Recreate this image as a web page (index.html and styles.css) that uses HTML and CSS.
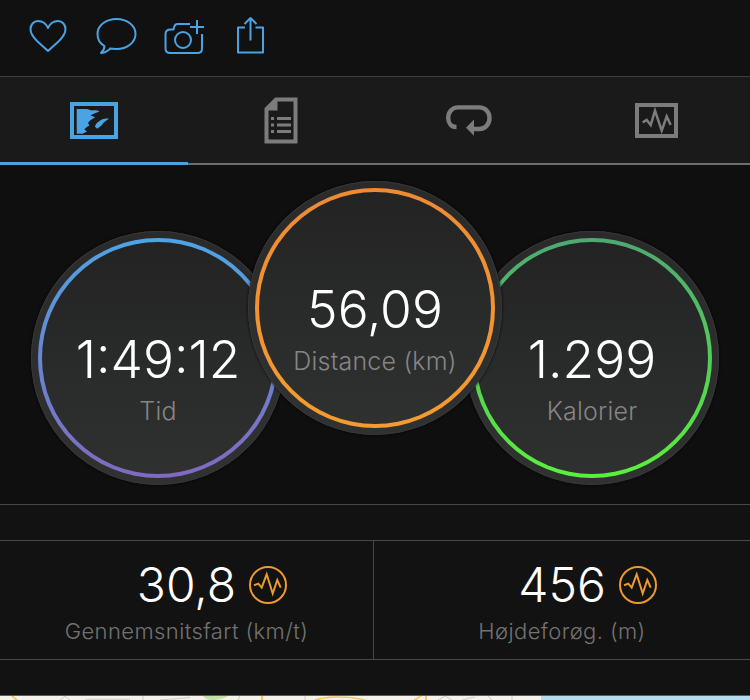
FILE: index.html
```html
<!DOCTYPE html>
<html lang="da">
<head>
<meta charset="utf-8">
<title>Aktivitet</title>
<link rel="stylesheet" href="styles.css">
</head>
<body>
<div class="page">
  <header class="actions">
    <svg class="action-icon" viewBox="0 0 44 44"><path d="M22 12C20 7.500 16 5 12 5 7.500 5 4.500 9 4.500 13 4.500 17 7 21 11 25L22 35 33 25C37 21 39.500 17 39.500 13 39.500 9 36.500 5 32 5 28 5 24 7.500 22 12Z"/></svg>
    <svg class="action-icon" viewBox="0 0 44 44"><path d="M16 33C13 35.500 10 37 7 37 9 35 10.500 32.500 10.500 30 6 27.500 3.500 23 3.500 18 3.500 9.500 12 3 22.500 3 33 3 41.500 9.500 41.500 18 41.500 26.500 33 33 22.500 33 20.500 33 18 33 16 32.600Z"/></svg>
    <svg class="action-icon" viewBox="0 0 44 44"><path d="M28 8H15.500C13.500 8 12.800 9 12.300 10.500L11.500 13.500H8.500C5.500 13.500 3.500 15 3.500 18V32.500C3.500 35.500 5.500 37 8.500 37H35.500C38 37 40 35.500 40 32.500V18"/><circle cx="21" cy="24" r="8"/><path d="M35 4V18M28 11H42"/></svg>
    <svg class="action-icon" viewBox="0 0 44 44"><path d="M15 11.500H8V36.500H33V11.500H25.500M20.500 2V24.500M14.500 8L20.500 2 26.500 8"/></svg>
  </header>

  <nav class="tabs">
    <div class="tab tab-active">
      <svg class="tab-icon" width="48" height="37" viewBox="0 0 48 37"><rect class="tab-frame" x="2" y="2" width="44" height="33"/><path class="tab-fill" d="M6.700 7H17L22 8.500C25 8 28 8.500 29.500 9.500 26 11 22 12 20.500 13.500 22 14 24 14.500 25 15.500 22 17 19 19 18 21L19.500 23.500C17 25 15 26 14.500 27.500L17 29.500C15 30.500 13.500 31 13 31.700H6.700ZM39 16.700C35 16 31.700 17 28 20 25.500 22 25 24.700 25 24.700L27.300 26.700 31.700 23.300C33 20.500 36 18.800 39 16.700Z"/></svg>
    </div>
    <div class="tab">
      <svg class="tab-icon" width="32" height="45" viewBox="0 0 32 45"><path class="tab-frame" d="M11 1.500H30.500V43.500H1.500V11Z"/><path class="tab-fill" d="M12.500 1V12.500H1ZM6 19h3v3H6ZM12 19H26v3H12ZM6 25.500h3v3H6ZM12 25.500H26v3H12ZM6 32h3v3H6ZM12 32H26v3H12Z"/></svg>
    </div>
    <div class="tab">
      <svg class="tab-icon" width="46" height="31" viewBox="0 0 46 31"><path class="tab-frame tab-loop" d="M10.500 22H10C5.500 22 2.200 18.500 2.200 13 2.200 7 6 2.400 12 2.400H33C39.500 2.400 43.500 7 43.500 13 43.500 19 39.500 24 33.500 24H26"/><path class="tab-fill" d="M20 22.700L28 14.500V30.700Z"/></svg>
    </div>
    <div class="tab">
      <svg class="tab-icon" width="43" height="35" viewBox="0 0 43 35"><rect class="tab-frame" x="2" y="2" width="39" height="31"/><path class="tab-wave" d="M7.700 19.400L11.700 17 15.700 22 20 7.700 26.700 27.700 31.700 13.400 35.700 22"/></svg>
    </div>
  </nav>

  <section class="dials">
    <div class="dial dial-side">
      <div class="ring ring-time">
        <div class="dial-face">
          <div class="dial-value">1:49:12</div>
          <div class="dial-label">Tid</div>
        </div>
      </div>
    </div>
    <div class="dial dial-main">
      <div class="ring ring-distance">
        <div class="dial-face">
          <div class="dial-value">56,09</div>
          <div class="dial-label">Distance (km)</div>
        </div>
      </div>
    </div>
    <div class="dial dial-side">
      <div class="ring ring-calories">
        <div class="dial-face">
          <div class="dial-value">1.299</div>
          <div class="dial-label">Kalorier</div>
        </div>
      </div>
    </div>
  </section>

  <div class="spacer"></div>

  <section class="stats">
    <div class="stat">
      <div class="stat-value">30,8
        <svg class="badge" viewBox="0 0 40 40"><circle cx="20" cy="20" r="18"/><path d="M6 20.300L10.300 18.600 13.700 22.600 18.700 9.300 24.700 28.600 29.300 15 32.700 22.600"/></svg>
      </div>
      <div class="stat-label">Gennemsnitsfart (km/t)</div>
    </div>
    <div class="stat">
      <div class="stat-value">456
        <svg class="badge" viewBox="0 0 40 40"><circle cx="20" cy="20" r="18"/><path d="M6 20.300L10.300 18.600 13.700 22.600 18.700 9.300 24.700 28.600 29.300 15 32.700 22.600"/></svg>
      </div>
      <div class="stat-label">Højdeforøg. (m)</div>
    </div>
  </section>

  <div class="spacer"></div>

  <svg class="map" viewBox="0 0 750 5" preserveAspectRatio="none">
    <rect class="map-water" x="541" y="0" width="209" height="5"/>
    <path class="map-green" d="M203 0H228C225 3 218 5 212 5 208 5 205 3 203 0Z"/>
    <path class="map-road" d="M12 0L17 5M262 0V5M315 5C325 1 345 -1 365 5M414 5C418 3 420 1 421 0M426 0V5"/>
    <path class="map-line" d="M60 5L65 0 70 5M85 4H130M143 0V5M240 0L238 5M160 5L190 2M305 0V5M438 5L445 0 452 5M462 5L475 1M488 0L492 5M512 0V5"/>
  </svg>
</div>
</body>
</html>
```

FILE: styles.css
```css
* {
  box-sizing: border-box;
}

html,
body {
  margin: 0;
  padding: 0;
  background: #111111;
}

body {
  font-family: Inter, "Liberation Sans", sans-serif;
  overflow: hidden;
}

.page {
  width: 750px;
  height: 700px;
  display: flex;
  flex-direction: column;
  overflow: hidden;
}

.actions {
  height: 77px;
  flex: none;
  display: flex;
  align-items: center;
  gap: 24px;
  padding-left: 26px;
  background: #111111;
  border-bottom: 1px solid #3d3d3d;
}

.action-icon {
  width: 44px;
  height: 44px;
  flex: none;
  fill: none;
  stroke: #4aa3e3;
  stroke-width: 2;
  stroke-linejoin: round;
}

.tabs {
  height: 88px;
  flex: none;
  display: flex;
  background: #1a1a1a;
}

.tab {
  flex: 1;
  display: flex;
  align-items: center;
  justify-content: center;
  padding-top: 1px;
  border-bottom: 2px solid #6e6e6e;
  color: #7c7c7c;
}

.tab-active {
  border-bottom: 3px solid #4aa3e3;
  color: #4aa3e3;
}

.tab-icon {
  display: block;
  overflow: visible;
}

.tab-frame {
  fill: none;
  stroke: currentColor;
  stroke-width: 4;
}

.tab-loop {
  stroke-width: 4.400;
}

.tab-fill {
  fill: currentColor;
}

.tab-wave {
  fill: none;
  stroke: currentColor;
  stroke-width: 2.500;
}

.dials {
  height: 340px;
  flex: none;
  display: flex;
  align-items: flex-start;
  padding: 16px 0 0 31px;
  background: #0f0f0f;
  border-bottom: 1px solid #474747;
}

.dial {
  width: 254px;
  height: 254px;
  flex: none;
  padding: 7px;
  border-radius: 50%;
  background: linear-gradient(#2a2a2a, #303131);
  box-shadow: inset 0 0 0 1px #373737, 0 0 3px #000000;
}

.dial-side {
  margin-top: 50px;
}

.dial-main {
  position: relative;
  z-index: 1;
  margin: 0 -37px;
}

.ring {
  width: 100%;
  height: 100%;
  padding: 4px;
  border-radius: 50%;
}

.ring-time {
  background: linear-gradient(#4ea4e4, #8169bf);
}

.ring-distance {
  background: linear-gradient(#ee8a35, #f59c2e);
}

.ring-calories {
  background: linear-gradient(#4ea873, #5bf03c);
}

.dial-face {
  width: 100%;
  height: 100%;
  display: flex;
  flex-direction: column;
  align-items: center;
  padding-top: 86px;
  border-radius: 50%;
  background: linear-gradient(#232323, #2f3131);
}

.dial-value {
  font-size: 51.500px;
  font-weight: 300;
  line-height: 62px;
  color: #ffffff;
}

.dial-label {
  margin-top: 6px;
  font-size: 25px;
  font-weight: 300;
  line-height: 30px;
  letter-spacing: 0.200px;
  color: #858585;
}

.spacer {
  height: 36px;
  flex: none;
  background: #121212;
  border-bottom: 1px solid #4a4a4a;
}

.stats {
  height: 119px;
  flex: none;
  display: flex;
  background: #121212;
  border-bottom: 1px solid #4a4a4a;
}

.stats + .spacer {
  height: 35px;
  border-bottom: 0;
}

.stat {
  display: flex;
  flex-direction: column;
  align-items: center;
  padding-top: 16px;
}

.stat:first-child {
  width: 374px;
  border-right: 1px solid #474747;
}

.stat:last-child {
  width: 376px;
}

.stat-value {
  position: relative;
  font-size: 48px;
  font-weight: 300;
  line-height: 56px;
  color: #ffffff;
}

.badge {
  position: absolute;
  top: 8px;
  left: 100%;
  width: 40px;
  height: 40px;
  margin-left: 12px;
  fill: none;
  stroke: #ea9a2e;
  stroke-width: 2;
}

.stat-label {
  margin-top: 5px;
  font-size: 22px;
  font-weight: 300;
  line-height: 26px;
  letter-spacing: 0.400px;
  color: #727272;
}

.map {
  display: block;
  width: 750px;
  height: 5px;
  flex: none;
  background: #f6f2ea;
  border-top: 1px solid #5c5c5c;
}

.map-water {
  fill: #b3dcef;
}

.map-green {
  fill: #c6e0a6;
}

.map-road {
  fill: none;
  stroke: #f6c561;
  stroke-width: 2;
}

.map-line {
  fill: none;
  stroke: #c9c6bf;
  stroke-width: 1;
}
```
